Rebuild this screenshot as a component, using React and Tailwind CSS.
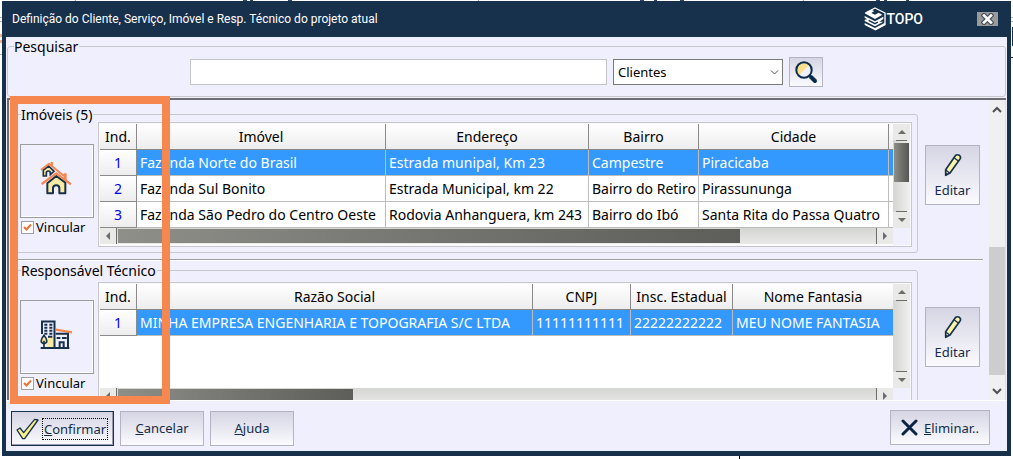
const uiFont = "font-['Noto_Sans','DejaVu_Sans',sans-serif]";

const buttonFace =
  "border border-[#b4b3c4] bg-linear-to-b from-[#d6d5e4] to-[#fafafe] text-[#142c49]";

function TopoLogo() {
  return (
    <div className="flex items-center text-white">
      <svg width="22" height="24" viewBox="0 0 66 72" aria-hidden="true">
        <path d="M4 18 L33 3 L63 18 L63 53 L33 69" fill="none" stroke="#fff" strokeWidth="4" strokeLinejoin="round" />
        <path d="M2 19 L22 8 L31 12 L22 18 L33 23 L44 17 L55 23 L33 36 Z" fill="#fff" />
        <path d="M2 27 L33 43 L58 29 L58 36 L46 44 L58 44 L33 58 L2 42 L2 38 L10 37 L2 32 Z" fill="#fff" />
        <path d="M14 40 L33 50 L42 45" fill="none" stroke="#17304b" strokeWidth="4" />
        <path d="M2 48 L33 63 L63 47 L63 54 L33 70 L2 54 Z" fill="#fff" />
      </svg>
      <span className="font-['Roboto',sans-serif] text-[14px] leading-4 font-medium">TOPO</span>
    </div>
  );
}

function HousesIcon() {
  return (
    <svg width="32" height="34" viewBox="0 0 96 102" aria-hidden="true">
      <path d="M10 24 V42 H19 V33 Q19 27 25 27 Q31 27 31 33 V38 L42 28 L26 12 Z" fill="#fbeaa0" stroke="#17304b" strokeWidth="5" />
      <path d="M3 24 L27 5 L72 42" fill="none" stroke="#f5874f" strokeWidth="6" />
      <path d="M32 0 H39 V14 L32 8 Z" fill="#f5874f" />
      <path d="M22 64 V94 H39 V79 Q39 70 49 70 Q58 70 58 79 V94 H76 V62 L49 42 Z" fill="#fbeaa0" stroke="#17304b" strokeWidth="6" strokeLinejoin="round" />
      <path d="M5 66 L49 34 L93 67" fill="none" stroke="#f5874f" strokeWidth="7" />
      <path d="M71 34 H80 V58 L71 52 Z" fill="#f5874f" />
    </svg>
  );
}

function BuildingsIcon() {
  return (
    <svg width="33" height="30" viewBox="0 0 99 90" aria-hidden="true">
      <path d="M24 52 H46 V84 H20 V60 Z" fill="#fbeaa0" />
      <path d="M6 42 V4.5 H43.5 V84" fill="none" stroke="#17304b" strokeWidth="6" />
      <path d="M13 14 H22 M28 14 H37 M13 23 H22 M28 23 H37 M13 32 H22 M28 32 H37 M13 41 H22 M28 41 H37 M24 50 H37" stroke="#17304b" strokeWidth="6" />
      <path d="M47 29 L96 37" stroke="#f5874f" strokeWidth="7" />
      <path d="M47 41 H84 V82" fill="none" stroke="#17304b" strokeWidth="6" />
      <path d="M50 54 H61 M66 54 H80" stroke="#17304b" strokeWidth="6" />
      <path d="M59 84 V67 H71 V84" fill="none" stroke="#17304b" strokeWidth="6" />
      <path d="M2 84 H88" stroke="#17304b" strokeWidth="6" />
      <path d="M12 46 Q2 58 4 66 Q12 76 20 66 Q22 58 12 46 Z" fill="#fbeaa0" stroke="#17304b" strokeWidth="5" />
      <path d="M12 62 V84" stroke="#17304b" strokeWidth="5" />
    </svg>
  );
}

function PencilIcon() {
  return (
    <svg width="18" height="24" viewBox="0 0 54 72" aria-hidden="true">
      <path d="M5 50 L34 8 Q39 3 46 7 Q52 12 48 18 L18 60 L5 67 Z" fill="#fbf5a8" stroke="#17304b" strokeWidth="5" strokeLinejoin="round" />
      <path d="M30 14 L43 24 M5 51 L17 60" stroke="#17304b" strokeWidth="4" />
      <path d="M4 58 L12 63 L4 69 Z" fill="#17304b" />
    </svg>
  );
}

function Arrow({ dir }) {
  const d = {
    up: "M0 5 L4 1 L8 5 Z",
    down: "M0 1 L4 5 L8 1 Z",
    left: "M5 0 L1 4 L5 8 Z",
    right: "M1 0 L5 4 L1 8 Z",
  }[dir];
  const wide = dir === "up" || dir === "down";
  return (
    <svg width={wide ? 8 : 6} height={wide ? 6 : 8} aria-hidden="true">
      <path d={d} fill="#6c6c68" />
    </svg>
  );
}

function HorizontalBar({ thumb }) {
  return (
    <div className="flex h-[17px] items-stretch border-b border-white bg-linear-to-b from-[#d4d6d2] to-[#e9e9e7]">
      <div className="flex w-[17px] items-center justify-center border-r border-[#6c6c68] bg-[#e9e9e7]">
        <Arrow dir="left" />
      </div>
      <div className="flex flex-1 py-px pl-px">
        <div className={`bg-linear-to-r from-[#8e8f89] to-[#5d5d59] ${thumb}`} />
      </div>
      <div className="flex w-[17px] items-center justify-center border-l border-[#6c6c68] bg-[#e9e9e7]">
        <Arrow dir="right" />
      </div>
    </div>
  );
}

function VerticalBar({ thumb }) {
  return (
    <div className="flex h-[104px] w-[17px] flex-col items-center bg-linear-to-r from-[#d4d6d2] to-[#f0f0ee]">
      <div className="flex h-4 w-full items-center justify-center bg-[#e9e9e7]">
        <Arrow dir="up" />
      </div>
      <div className="h-px w-[11px] bg-[#6c6c68]" />
      <div className="w-full flex-1 px-px pt-[2px]">
        {thumb && <div className="h-[39px] bg-linear-to-r from-[#8e8f89] to-[#555551]" />}
      </div>
      <div className="h-px w-[11px] bg-[#6c6c68]" />
      <div className="flex h-4 w-full items-center justify-center bg-[#e9e9e7]">
        <Arrow dir="down" />
      </div>
    </div>
  );
}

function DataTable({ label, columns, rows }) {
  return (
    <table aria-label={label} className="w-full table-fixed border-separate border-spacing-0 text-[14px] leading-5">
      <colgroup>
        <col className="w-[37px]" />
        {columns.map((c, i) => (
          <col key={i} className={c.width} />
        ))}
      </colgroup>
      <thead>
        <tr className="h-[26px]">
          {["Ind.", ...columns.map((c) => c.title)].map((title, i) => (
            <th
              key={i}
              className="overflow-hidden border-r border-b border-[#8a8a8a] bg-linear-to-b from-white to-[#ededed] p-0 font-normal whitespace-nowrap last:border-r-0"
            >
              {title}
            </th>
          ))}
        </tr>
      </thead>
      <tbody>
        {rows.map((row, r) => (
          <tr key={r} className={r === 0 ? "h-[26px] bg-[#3399ff] text-white" : "h-[26px] bg-white"}>
            <th
              scope="row"
              className="border-r border-b border-[#8a8a8a] bg-linear-to-b from-white to-[#ededed] p-0 font-normal text-[#0000f0]"
            >
              {r + 1}
            </th>
            {row.map((cell, i) => (
              <td
                key={i}
                className="overflow-hidden border-r border-b border-[#bdbdbd] py-0 pr-0 pl-[3px] whitespace-nowrap last:border-r-0"
              >
                {cell}
              </td>
            ))}
          </tr>
        ))}
      </tbody>
    </table>
  );
}

function Section({ id, title, icon, columns, rows, gridTop, editTop, hThumb, vThumb }) {
  return (
    <section className="flex items-start gap-[7px] pr-[3px]">
      <fieldset className="min-w-0 flex-1 rounded-[3px] border border-[#c8c8cc] pr-[5px] pb-[5px] pl-1">
        <legend className="ml-px h-4 pr-px text-[14px] leading-[18px]">{title}</legend>
        <div className="flex items-start gap-1">
          <div className="w-[74px] shrink-0 pt-[22px]">
            <button
              type="button"
              aria-label={title}
              className="flex h-[74px] w-[74px] items-center justify-center border border-[#9c9c9c] pr-[2px] pb-1 shadow-[inset_-1px_-1px_0_#ffffff]"
            >
              {icon}
            </button>
            <label htmlFor={id} className="flex h-[18px] items-center gap-[2px] pl-px text-[13px] leading-4">
              <input
                id={id}
                type="checkbox"
                defaultChecked
                className="peer sr-only"
              />
              <span className="flex size-[13px] items-center justify-center border border-[#a0a0a0] bg-white">
                <svg width="9" height="9" viewBox="0 0 9 9" aria-hidden="true">
                  <path d="M1 4 L3.5 6.5 L8 1.5" fill="none" stroke="#f0703a" strokeWidth="2" />
                </svg>
              </span>
              Vincular
            </label>
          </div>
          <div className={`min-w-0 flex-1 ${gridTop}`}>
            <div className="flex items-start border border-[#c8c8cc] p-px shadow-[inset_0_0_0_1px_#f8f8fc]">
              <div className="min-w-0 flex-1">
                <div className="h-[104px] overflow-hidden bg-white">
                  <DataTable label={title} columns={columns} rows={rows} />
                </div>
                <HorizontalBar thumb={hThumb} />
              </div>
              <VerticalBar thumb={vThumb} />
            </div>
          </div>
        </div>
      </fieldset>
      <div className={editTop}>
        <button
          type="button"
          className={`flex h-[60px] w-[55px] flex-col items-center justify-end gap-[3px] pb-1 text-[13px] leading-5 ${buttonFace}`}
        >
          <PencilIcon />
          Editar
        </button>
      </div>
    </section>
  );
}

const properties = {
  columns: [
    { title: "Imóvel", width: "w-[249px]" },
    { title: "Endereço", width: "w-[203px]" },
    { title: "Bairro", width: "w-[110px]" },
    { title: "Cidade", width: "w-[190px]" },
    { title: "", width: "w-auto" },
  ],
  rows: [
    ["Fazenda Norte do Brasil", "Estrada munipal, Km 23", "Campestre", "Piracicaba", ""],
    ["Fazenda Sul Bonito", "Estrada Municipal, km 22", "Bairro do Retiro", "Pirassununga", ""],
    ["Fazenda São Pedro do Centro Oeste", "Rodovia Anhanguera, km 243", "Bairro do Ibó", "Santa Rita do Passa Quatro", ""],
  ],
};

const technicians = {
  columns: [
    { title: "Razão Social", width: "w-[396px]" },
    { title: "CNPJ", width: "w-[98px]" },
    { title: "Insc. Estadual", width: "w-[102px]" },
    { title: "Nome Fantasia", width: "w-auto" },
  ],
  rows: [
    ["MINHA EMPRESA ENGENHARIA E TOPOGRAFIA S/C LTDA", "11111111111", "22222222222", "MEU NOME FANTASIA"],
  ],
};

function PaneScrollbar() {
  return (
    <div className="flex w-[17px] shrink-0 flex-col items-center border-r border-[#dedee4] bg-[#f0f0f0]">
      <svg width="16" height="19" aria-hidden="true">
        <path d="M4 12 L8 8 L12 12" fill="none" stroke="#505050" strokeWidth="2" />
      </svg>
      <div className="flex w-full flex-1 flex-col justify-end">
        <div className="h-1/2 bg-[#cdcdcd]" />
      </div>
      <svg width="16" height="25" aria-hidden="true">
        <path d="M4 14 L8 18 L12 14" fill="none" stroke="#505050" strokeWidth="2" />
      </svg>
    </div>
  );
}

export default function App() {
  return (
    <div className={`relative flex h-screen flex-col bg-white pr-[2px] pl-[2px] text-black ${uiFont}`}>
      <svg className="h-px w-full shrink-0" aria-hidden="true">
        <path d="M241 0.5 h4 M248 0.5 h3 M286 0.5 h4 M638 0.5 h4 M652 0.5 h3 M678 0.5 h4 M874 0.5 h4 M882 0.5 h3 M904 0.5 h3" stroke="#2b4468" />
        <path d="M73 0.5 h1 M476 0.5 h1 M801 0.5 h1" stroke="#a0a0a0" />
      </svg>
      <svg className="absolute top-0 right-0 h-[60px] w-[2px]" aria-hidden="true">
        <path d="M0 17.5 H2 M0 21.5 H2" stroke="#b8b8c0" />
        <path d="M1 27 H2 V46 H1 Z" fill="#17304b" />
        <path d="M0 57.5 H2" stroke="#202020" />
      </svg>
      <svg className="absolute top-0 left-0 h-[60px] w-[2px]" aria-hidden="true">
        <path d="M0 17.5 H2 M0 21.5 H2 M0 54.5 H2" stroke="#b8b8c0" />
        <path d="M0 34 H2 V37 H0 Z M0 40 H2 V43 H0 Z" fill="#f3b392" />
      </svg>
      <div className="flex min-h-0 flex-1 flex-col bg-[#17304b] px-1 pb-[5px]">
        <header className="flex h-9 shrink-0 items-center pr-[9px] pl-[6px]">
          <h1 className="flex-1 font-['Roboto','Noto_Sans',sans-serif] text-[12px] leading-5 font-normal text-white">
            Definição do Cliente, Serviço, Imóvel e Resp. Técnico do projeto atual
          </h1>
          <TopoLogo />
          <button
            type="button"
            aria-label="Fechar"
            className="ml-[54px] flex h-[14px] w-[21px] items-center justify-center bg-[#9a9a9a]"
          >
            <svg width="13" height="12" viewBox="0 0 13 12" aria-hidden="true">
              <path d="M3 2.5 L10 9.5 M10 2.5 L3 9.5" stroke="#44505c" strokeWidth="5" strokeLinecap="square" />
              <path d="M3 2.5 L10 9.5 M10 2.5 L3 9.5" stroke="#fff" strokeWidth="2.6" strokeLinecap="square" />
            </svg>
          </button>
        </header>

        <main className="flex min-h-0 flex-1 flex-col bg-[#f0effe]">
          <fieldset className="mx-px mt-px mb-px shrink-0 rounded-[3px] border border-[#c8c8cc] px-[182px] pt-[3px] pb-[9px]">
            <legend className="-ml-[176px] h-4 pr-px text-[14px] leading-[18px]">Pesquisar</legend>
            <div className="flex items-center gap-[6px]">
              <input
                type="text"
                aria-label="Pesquisar"
                className="h-[26px] min-w-0 flex-1 border border-[#c4c4c8] bg-white px-1 text-[14px]"
              />
              <div className="relative">
                <select
                  aria-label="Tipo de cadastro"
                  className="h-[26px] w-[170px] appearance-none border border-[#7a7a7a] bg-white pl-1 text-[13px] leading-5"
                >
                  <option>Clientes</option>
                </select>
                <svg className="pointer-events-none absolute top-[10px] right-1" width="9" height="7" aria-hidden="true">
                  <path d="M1 1.5 L4.5 5 L8 1.5" fill="none" stroke="#505050" />
                </svg>
              </div>
              <button
                type="button"
                aria-label="Buscar"
                className={`flex h-[30px] w-[34px] items-center justify-center ${buttonFace}`}
              >
                <svg width="24" height="24" viewBox="0 0 24 24" aria-hidden="true">
                  <circle cx="10" cy="10" r="7.5" fill="#eef0fa" />
                  <path d="M4.7 15.3 A7.5 7.5 0 0 1 15.3 4.7 Z" fill="#fbe08c" />
                  <circle cx="10" cy="10" r="7.7" fill="none" stroke="#0c2c4c" strokeWidth="2" />
                  <path d="M15 15 L17 17" stroke="#0c2c4c" strokeWidth="2" />
                  <path d="M17 17 L21 21" stroke="#0c2c4c" strokeWidth="4" strokeLinecap="round" />
                </svg>
              </button>
            </div>
          </fieldset>

          <div className="relative flex min-h-0 flex-1 flex-col">
            <div className="mx-px flex min-h-0 flex-1 overflow-hidden border-t-2 border-l-2 border-[#6e6e72]">
              <div className="min-w-0 flex-1 pt-[6px] pr-[6px] pl-[6px]">
                <Section
                  id="link-property"
                  title="Imóveis (5)"
                  icon={<HousesIcon />}
                  {...properties}
                  gridTop="pt-0"
                  editTop="pt-[39px]"
                  hThumb="w-[82%]"
                  vThumb
                />
                <hr className="mt-[6px] mb-px h-[2px] border-0 border-t border-[#a0a0a4] bg-white" />
                <Section
                  id="link-technician"
                  title="Responsável Técnico"
                  icon={<BuildingsIcon />}
                  {...technicians}
                  gridTop="pt-1"
                  editTop="pt-[45px]"
                  hThumb="w-[31%]"
                />
              </div>
              <PaneScrollbar />
            </div>
            <div className="pointer-events-none absolute -top-[2px] -bottom-[4px] left-1 z-10 w-40 border-8 border-[#f5874f]" />
          </div>

          <footer className="flex h-[51px] shrink-0 items-start gap-[6px] border-t border-white pt-[10px] pr-[17px] pl-[5px] text-[13px] leading-5">
            <button
              type="button"
              className="flex h-[35px] w-[103px] items-center gap-[3px] border border-[#17304b] bg-linear-to-b from-[#d6d5e4] to-[#fafafe] pl-1 text-[#142c49] shadow-[inset_-1px_-1px_0_#9a9ab0]"
            >
              <svg width="23" height="22" viewBox="0 0 69 66" aria-hidden="true">
                <path d="M3 36 L12 30 L23 44 L56 4 L66 6 L26 62 L20 62 Z" fill="#fbf08c" stroke="#17304b" strokeWidth="4" strokeLinejoin="round" />
              </svg>
              <span className="border border-dotted border-black px-px">
                <u>C</u>onfirmar
              </span>
            </button>
            <button type="button" className={`h-[35px] w-[84px] pb-[2px] ${buttonFace}`}>
              <u>C</u>ancelar
            </button>
            <button type="button" className={`h-[35px] w-[84px] pb-[2px] ${buttonFace}`}>
              <u>A</u>juda
            </button>
            <button
              type="button"
              className={`-mt-px ml-auto flex h-[35px] w-[100px] items-center justify-center gap-[6px] ${buttonFace}`}
            >
              <svg width="17" height="17" viewBox="0 0 17 17" aria-hidden="true">
                <path d="M2 2 L15 15 M15 2 L2 15" stroke="#0c2444" strokeWidth="3" strokeLinecap="round" />
              </svg>
              <span>
                <u>E</u>liminar..
              </span>
            </button>
          </footer>
        </main>
      </div>
      <div className="flex h-[3px] shrink-0 pl-[737px]">
        <div className="w-px bg-black" />
      </div>
    </div>
  );
}
